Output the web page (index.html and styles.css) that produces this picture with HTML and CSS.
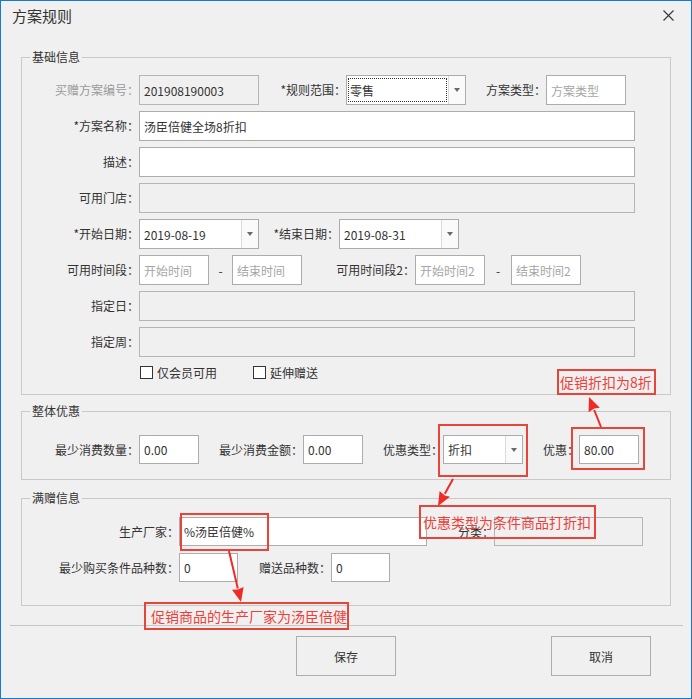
FILE: index.html
```html
<!DOCTYPE html>
<html lang="zh-CN">
<head>
<meta charset="utf-8">
<title>方案规则</title>
<link rel="stylesheet" href="styles.css">
</head>
<body>
<div class="window">
  <div class="titlebar">
    <span class="title">方案规则</span>
    <svg class="close" width="11" height="11" viewBox="0 0 11 11"><path d="M0.5 0.5L10.5 10.5M10.5 0.5L0.5 10.5" stroke="#3a3a3a" stroke-width="1.2" fill="none"/></svg>
  </div>

  <fieldset class="group g1">
    <legend>基础信息</legend>
    <div class="row">
      <span class="lbl w117 dis">买赠方案编号：</span>
      <div class="box off w120">201908190003</div>
      <span class="lbl w87">*规则范围：</span>
      <div class="combo w120"><div class="ctext"><span class="focus">零售</span></div><div class="cbtn"><i></i></div></div>
      <span class="lbl w80">方案类型：</span>
      <div class="box w80 ph">方案类型</div>
    </div>
    <div class="row">
      <span class="lbl w117">*方案名称：</span>
      <div class="box w496">汤臣倍健全场8折扣</div>
    </div>
    <div class="row">
      <span class="lbl w117">描述：</span>
      <div class="box w496"></div>
    </div>
    <div class="row">
      <span class="lbl w117">可用门店：</span>
      <div class="box off w496"></div>
    </div>
    <div class="row">
      <span class="lbl w117">*开始日期：</span>
      <div class="combo w120"><div class="ctext">2019-08-19</div><div class="cbtn"><i></i></div></div>
      <span class="lbl w80">*结束日期：</span>
      <div class="combo w120"><div class="ctext">2019-08-31</div><div class="cbtn"><i></i></div></div>
    </div>
    <div class="row">
      <span class="lbl w117">可用时间段：</span>
      <div class="box w70 ph">开始时间</div>
      <span class="dash w23">-</span>
      <div class="box w70 ph">结束时间</div>
      <span class="lbl w113">可用时间段2：</span>
      <div class="box w70 ph">开始时间2</div>
      <span class="dash w26">-</span>
      <div class="box w70 ph">结束时间2</div>
    </div>
    <div class="row">
      <span class="lbl w117">指定日：</span>
      <div class="box off w496"></div>
    </div>
    <div class="row">
      <span class="lbl w117">指定周：</span>
      <div class="box off w496"></div>
    </div>
    <div class="checks">
      <span class="chk"></span><span class="chklbl">仅会员可用</span>
      <span class="chk second"></span><span class="chklbl">延伸赠送</span>
    </div>
  </fieldset>

  <fieldset class="group g2">
    <legend>整体优惠</legend>
    <div class="row r29">
      <span class="lbl w117">最少消费数量：</span>
      <div class="box w60">0.00</div>
      <span class="lbl w104">最少消费金额：</span>
      <div class="box w60">0.00</div>
      <span class="lbl w80">优惠类型：</span>
      <div class="combo w80"><div class="ctext">折扣</div><div class="cbtn"><i></i></div></div>
      <span class="lbl w56">优惠：</span>
      <div class="box w60">80.00</div>
    </div>
  </fieldset>

  <fieldset class="group g3">
    <legend>满赠信息</legend>
    <div class="row r29">
      <span class="lbl w157">生产厂家：</span>
      <div class="box w248">%汤臣倍健%</div>
      <span class="lbl w67">分类：</span>
      <div class="box off w149"></div>
    </div>
    <div class="row r29">
      <span class="lbl w157">最少购买条件品种数：</span>
      <div class="box w59">0</div>
      <span class="lbl w93">赠送品种数：</span>
      <div class="box w59">0</div>
    </div>
  </fieldset>

  <div class="separator"></div>

  <div class="buttons">
    <button class="btn">保存</button>
    <button class="btn cancel">取消</button>
  </div>

  <div class="annot">
    <div class="note n1">促销折扣为8折</div>
    <div class="frame f-type"></div>
    <div class="frame f-val"></div>
    <div class="note n2">优惠类型为条件商品打折扣</div>
    <div class="frame f-maker"></div>
    <div class="note n3">促销商品的生产厂家为汤臣倍健</div>
    <svg class="arrows" width="692" height="699" viewBox="0 0 692 699">
      <g stroke="#ee2b24" stroke-width="2" fill="none">
        <path d="M601 427L594.2 410"/>
        <path d="M453 479L444.8 493.8"/>
        <path d="M229 551L237.8 588.4"/>
      </g>
      <g fill="#ee2b24">
        <path d="M589 397L599.8 407.8L594.2 408.5L588.6 412.2Z"/>
        <path d="M438 506L450 496.7L444.8 495.5L439.6 490.9Z"/>
        <path d="M241 602L243.6 587L237.8 589.5L232 589.8Z"/>
      </g>
    </svg>
  </div>
</div>
</body>
</html>
```

FILE: styles.css
```css
html, body {
  margin: 0;
  padding: 0;
  background: #f0f0f0;
}

body {
  font-family: "Noto Sans CJK SC", "Microsoft YaHei", "Noto Sans", sans-serif;
  font-size: 12px;
  color: #333;
}

.window {
  position: relative;
  width: 692px;
  height: 699px;
  box-sizing: border-box;
  border: 1px solid #1779d0;
  background: #f0f0f0;
  overflow: hidden;
}

.titlebar {
  height: 32px;
  display: flex;
  align-items: center;
  justify-content: space-between;
  padding: 0 17px 0 11px;
}

.title {
  font-size: 15px;
  color: #333;
  line-height: 20px;
  margin-top: -2px;
}

.close {
  display: block;
  margin-top: -4px;
}

.group {
  margin: 0 0 0 20px;
  width: 650px;
  box-sizing: border-box;
  border: 1px solid #c9c9c9;
  min-width: 0;
}

.group legend {
  margin-left: 8px;
  padding: 0 2px;
  font-size: 12px;
  line-height: 16px;
  color: #333;
}

.g1 {
  margin-top: 16px;
  padding: 10px 0 13px 0;
}

.g2 {
  margin-top: 8px;
  padding: 16px 0 15px 0;
}

.g3 {
  margin-top: 10px;
  padding: 11px 0 23px 0;
}

.row {
  display: flex;
  align-items: center;
  height: 30px;
  margin-bottom: 6px;
}

.row:last-child {
  margin-bottom: 0;
}

.r29 {
  height: 29px;
}

.g3 .row {
  margin-bottom: 7px;
}

.g3 .row:last-child {
  margin-bottom: 0;
}

.lbl {
  flex: none;
  text-align: right;
  white-space: nowrap;
  color: #333;
  line-height: 16px;
}

.lbl.dis {
  color: #9a9a9a;
}

.box {
  flex: none;
  height: 100%;
  box-sizing: border-box;
  border: 1px solid #acacac;
  background: #fff;
  padding-left: 4px;
  display: flex;
  align-items: center;
  color: #333;
  white-space: nowrap;
  overflow: hidden;
}

.box.off {
  background: #f0f0f0;
  border-color: #b5b5b5;
}

.box.ph {
  color: #a6a6a6;
}

.combo {
  flex: none;
  height: 100%;
  box-sizing: border-box;
  border: 1px solid #acacac;
  background: #fff;
  display: flex;
}

.ctext {
  flex: 1;
  display: flex;
  align-items: center;
  padding-left: 4px;
  color: #333;
}

.ctext .focus {
  display: flex;
  align-items: center;
  margin-left: -2px;
  margin-right: 2px;
  padding-left: 1px;
  width: 100%;
  height: 22px;
  outline: 1px dotted #333;
  outline-offset: 0;
}

.cbtn {
  flex: none;
  width: 16px;
  border-left: 1px solid #dadada;
  background: #fafafa;
  display: flex;
  align-items: center;
  justify-content: center;
}

.cbtn i {
  display: block;
  width: 0;
  height: 0;
  border-left: 3px solid transparent;
  border-right: 3px solid transparent;
  border-top: 4px solid #6a6a6a;
}

.dash {
  flex: none;
  text-align: center;
  color: #333;
}

.w23 { width: 23px; }
.w26 { width: 26px; }
.w56 { width: 56px; }
.w59 { width: 59px; }
.w60 { width: 60px; }
.w67 { width: 67px; }
.w70 { width: 70px; }
.w80 { width: 80px; }
.w87 { width: 87px; }
.w93 { width: 93px; }
.w104 { width: 104px; }
.w113 { width: 113px; }
.w117 { width: 117px; }
.w120 { width: 120px; }
.w149 { width: 149px; }
.w157 { width: 157px; }
.w248 { width: 248px; }
.w496 { width: 496px; }

.checks {
  display: flex;
  align-items: center;
  height: 18px;
  margin-top: 6px;
  padding-left: 118px;
}

.chk {
  flex: none;
  width: 13px;
  height: 13px;
  box-sizing: border-box;
  border: 1px solid #333;
  background: #fff;
}

.chk.second {
  margin-left: 36px;
}

.chklbl {
  margin-left: 4px;
  color: #333;
}

.separator {
  margin: 19px 0 0 9px;
  width: 673px;
  height: 1px;
  background: #c6c6c6;
}

.buttons {
  display: flex;
  margin-top: 10px;
  padding-left: 295px;
}

.btn {
  width: 100px;
  height: 40px;
  box-sizing: border-box;
  border: 1px solid #adadad;
  background: #f0f0f0;
  font-family: "Noto Sans CJK SC", "Microsoft YaHei", sans-serif;
  font-size: 12px;
  color: #333;
  padding: 0;
}

.btn.cancel {
  margin-left: 155px;
}

.annot {
  position: absolute;
  left: -1px;
  top: -1px;
  width: 692px;
  height: 699px;
  pointer-events: none;
}

.frame,
.note {
  position: absolute;
  box-sizing: border-box;
  border: 2px solid #e8453a;
}

.note {
  color: #ee3f3a;
  font-size: 14px;
  line-height: 18px;
  display: flex;
  align-items: center;
  white-space: nowrap;
}

.n1 {
  left: 557px;
  top: 369px;
  width: 99px;
  height: 26px;
  padding-left: 1px;
}

.n2 {
  left: 419px;
  top: 505px;
  width: 177px;
  height: 34px;
  padding-left: 2px;
}

.n3 {
  left: 144px;
  top: 602px;
  width: 205px;
  height: 28px;
  padding-left: 5px;
}

.f-type {
  left: 438px;
  top: 424px;
  width: 90px;
  height: 53px;
}

.f-val {
  left: 571px;
  top: 427px;
  width: 74px;
  height: 43px;
}

.f-maker {
  left: 180px;
  top: 513px;
  width: 89px;
  height: 38px;
}

.arrows {
  position: absolute;
  left: 0;
  top: 0;
}
```
